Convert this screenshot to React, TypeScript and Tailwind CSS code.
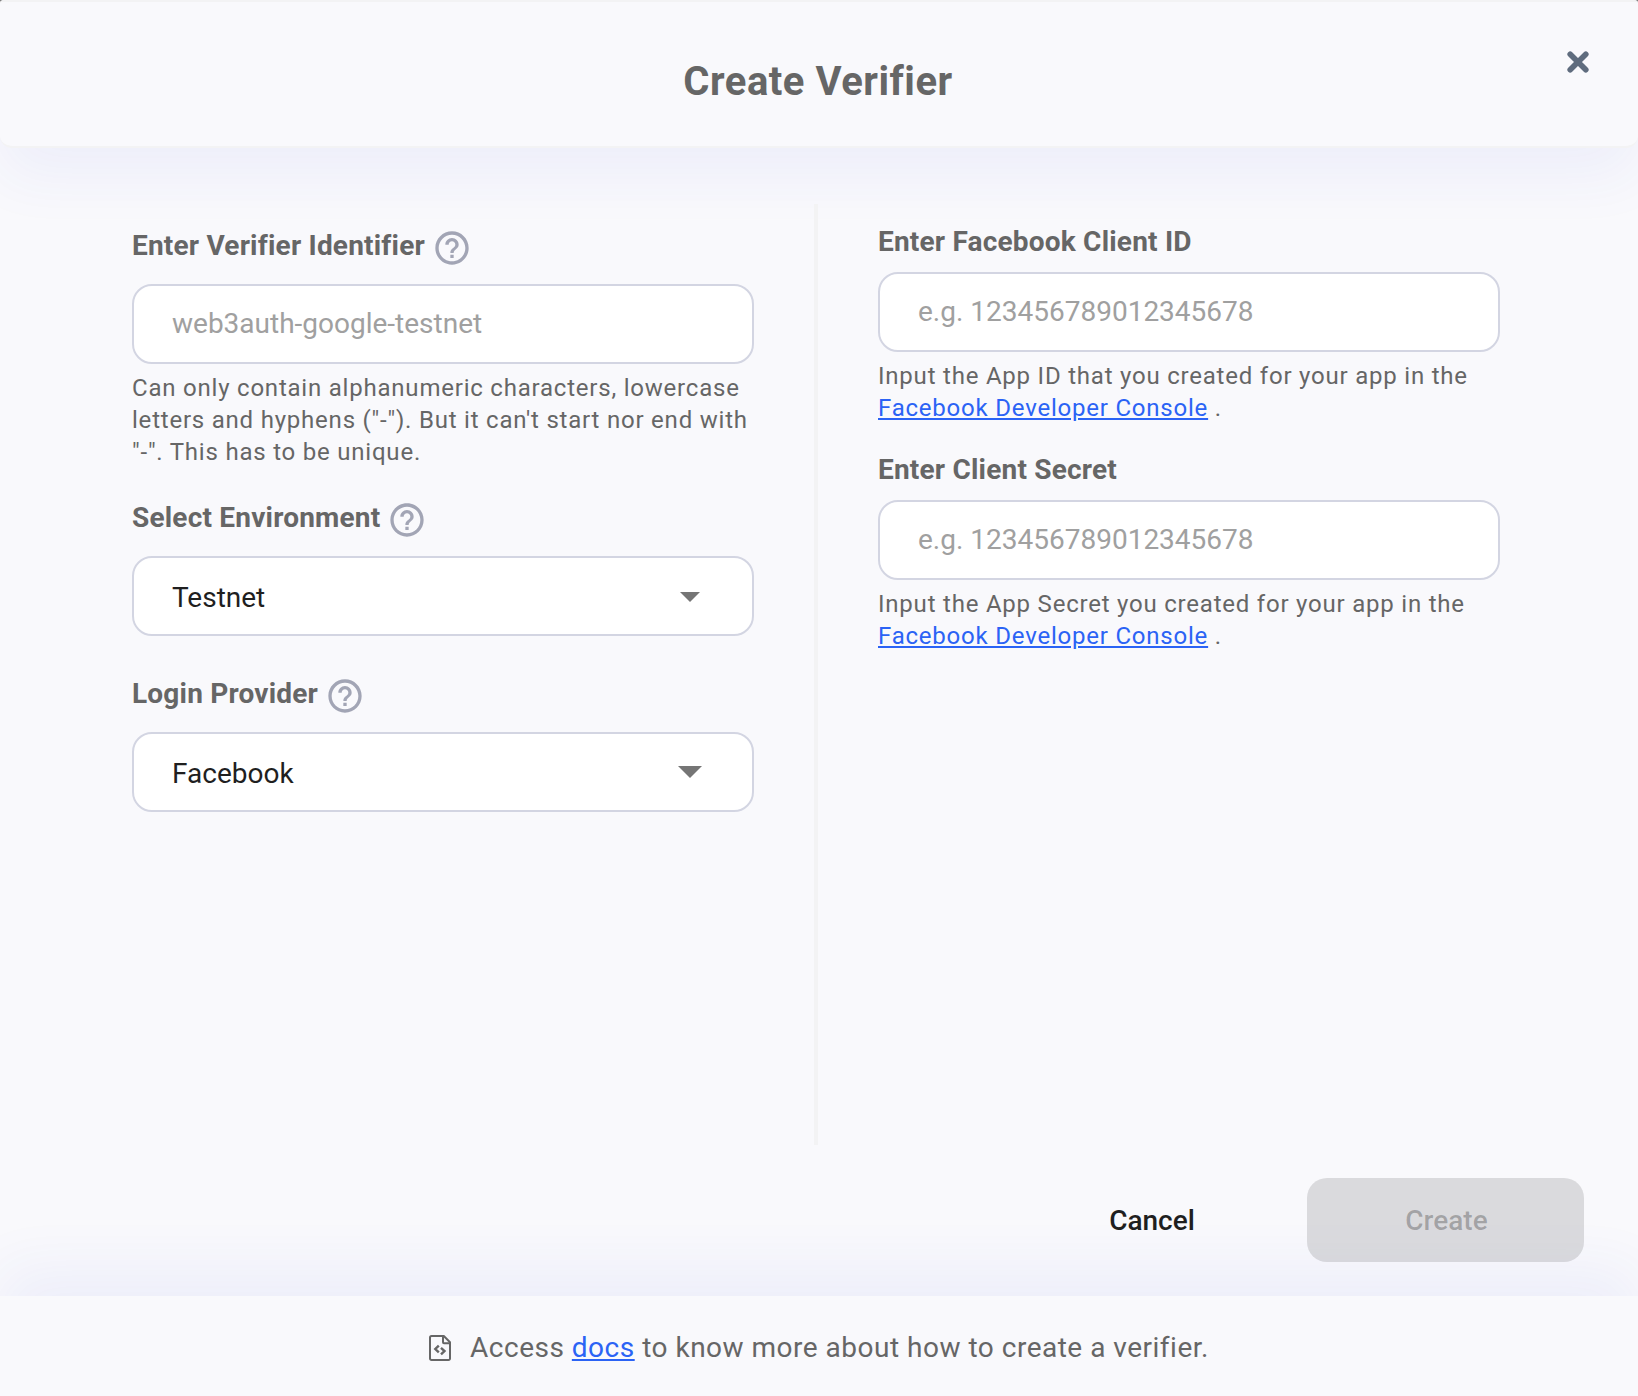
import type { ReactNode } from "react";

const HelpIcon = () => (
  <svg viewBox="0 0 24 24" className="size-10 shrink-0" fill="#a2a5b5">
    <path d="M11 18h2v-2h-2v2zm1-16C6.48 2 2 6.48 2 12s4.48 10 10 10 10-4.48 10-10S17.520 2 12 2zm0 18c-4.410 0-8-3.590-8-8s3.590-8 8-8 8 3.590 8 8-3.590 8-8 8zm0-14c-2.210 0-4 1.790-4 4h2c0-1.100.9-2 2-2s2 .9 2 2c0 2-3 1.750-3 5h2c0-2.250 3-2.500 3-5 0-2.210-1.790-4-4-4z" />
  </svg>
);

const CloseIcon = () => (
  <svg viewBox="0 0 22 22" className="size-[22px]" fill="none" stroke="#5f6c7e" strokeWidth="5.600" strokeLinecap="round">
    <path d="M3.200 3.200 18.800 18.800M18.800 3.200 3.200 18.800" />
  </svg>
);

const DocIcon = () => (
  <svg viewBox="0 0 22 26" className="mt-1 h-[26px] w-[22px]" fill="none" stroke="#666" strokeWidth="2" strokeLinejoin="round">
    <path d="M2.500 1h12.300L21 7.300V23.500a1.500 1.500 0 0 1-1.500 1.500h-17A1.500 1.500 0 0 1 1 23.500v-21A1.500 1.500 0 0 1 2.500 1Z" />
    <path d="M14 1.500v5.700a1 1 0 0 0 1 1h6" />
    <path strokeWidth="2.400" strokeLinejoin="miter" d="M9.800 10.600 6.300 14l3.500 3.400M12 12.800l3.500 3.200-3.500 3.400" />
  </svg>
);

const HelpLabel = ({ children }: { children: ReactNode }) => (
  <div className="mb-4 flex h-10 gap-[7px]">
    <span className="text-[28px] leading-[35px] font-bold tracking-[0.2px] text-[#666]">{children}</span>
    <HelpIcon />
  </div>
);

const Label = ({ children }: { children: ReactNode }) => (
  <div className="mb-3 text-[28px] leading-9 font-bold tracking-[0.2px] text-[#666]">{children}</div>
);

const Field = ({ placeholder }: { placeholder: string }) => (
  <input
    placeholder={placeholder}
    className="block h-20 w-full rounded-[20px] border-2 border-[#d3d5e2] bg-white px-[38px] pb-0.5 text-[28px] outline-none placeholder:text-[#a0a0a0]"
  />
);

const Hint = ({ children }: { children: ReactNode }) => (
  <p className="mt-2 text-[24px] leading-8 tracking-[0.785px] whitespace-nowrap text-[#666]">{children}</p>
);

const SelectBox = ({ value, large }: { value: string; large?: boolean }) => (
  <div className="flex h-20 w-full items-center justify-between rounded-[20px] border-2 border-[#d3d5e2] bg-white pl-[38px] text-[28px] text-[#1f1f1f]">
    <span className="pt-1">{value}</span>
    {large ? (
      <svg viewBox="0 0 24 12" className="mr-[50px] h-3 w-6" fill="#757575">
        <path d="M0 0h24L12 12z" />
      </svg>
    ) : (
      <svg viewBox="0 0 20 10" className="mt-0.5 mr-[52px] h-2.5 w-5" fill="#757575">
        <path d="M0 0h20L10 10z" />
      </svg>
    )}
  </div>
);

const Link = ({ children }: { children: ReactNode }) => (
  <a href="#" className="text-[#2b63f5] underline">
    {children}
  </a>
);

export default function App() {
  return (
    <div className="bg-[#808080]">
      <div className="flex h-[1396px] w-[1638px] flex-col overflow-hidden rounded-t-[4px] bg-[#f9f9fc] font-[Roboto,sans-serif]">
        <header className="relative flex h-[148px] shrink-0 justify-center rounded-b-[12px] border-y-2 border-[#f3f3f4] bg-[#f9f9fc] shadow-[0_28px_60px_rgba(46,70,220,0.06)]">
          <h1 className="pt-14 pr-0.5 text-[40px] leading-[48px] font-bold tracking-[0.5px] text-[#666]">Create Verifier</h1>
          <button className="absolute top-[49px] right-[49px]">
            <CloseIcon />
          </button>
        </header>

        <main className="relative mt-14 flex h-[941px] shrink-0 pl-[132px]">
          <section className="w-[622px] pt-6">
            <HelpLabel>Enter Verifier Identifier</HelpLabel>
            <Field placeholder="web3auth-google-testnet" />
            <Hint>
              Can only contain alphanumeric characters, lowercase
              <br />
              letters and hyphens ("-"). But it can't start nor end with
              <br />
              "-". This has to be unique.
            </Hint>
            <div className="mt-8">
              <HelpLabel>Select Environment</HelpLabel>
              <SelectBox value="Testnet" />
            </div>
            <div className="mt-10">
              <HelpLabel>Login Provider</HelpLabel>
              <SelectBox value="Facebook" large />
            </div>
          </section>

          <div className="ml-[60px] w-1 bg-[#f3f3f4]" />

          <section className="ml-[60px] w-[622px] pt-5">
            <Label>Enter Facebook Client ID</Label>
            <Field placeholder="e.g. 123456789012345678" />
            <Hint>
              Input the App ID that you created for your app in the
              <br />
              <Link>Facebook Developer Console</Link> .
            </Hint>
            <div className="mt-7">
              <Label>Enter Client Secret</Label>
              <Field placeholder="e.g. 123456789012345678" />
              <Hint>
                Input the App Secret you created for your app in the
                <br />
                <Link>Facebook Developer Console</Link> .
              </Hint>
            </div>
          </section>
        </main>

        <div className="relative z-10 mt-[33px] flex h-[84px] shrink-0 justify-end gap-[46px] pr-[54px] text-[28px] font-medium">
          <button className="w-[218px] pt-0.5 text-[#1f1f1f]">Cancel</button>
          <button className="w-[277px] rounded-[20px] bg-black/12 pt-0.5 pl-0.5 text-black/26">Create</button>
        </div>

        <footer className="mt-[34px] flex h-[100px] items-center justify-center bg-[#f9f9fc] text-[28px] tracking-[0.5px] text-[#666] shadow-[0_-28px_60px_rgba(46,70,220,0.06)]">
          <DocIcon />
          <span className="ml-[19px] pt-1">
            Access <Link>docs</Link> to know more about how to create a verifier.
          </span>
        </footer>
      </div>
    </div>
  );
}
